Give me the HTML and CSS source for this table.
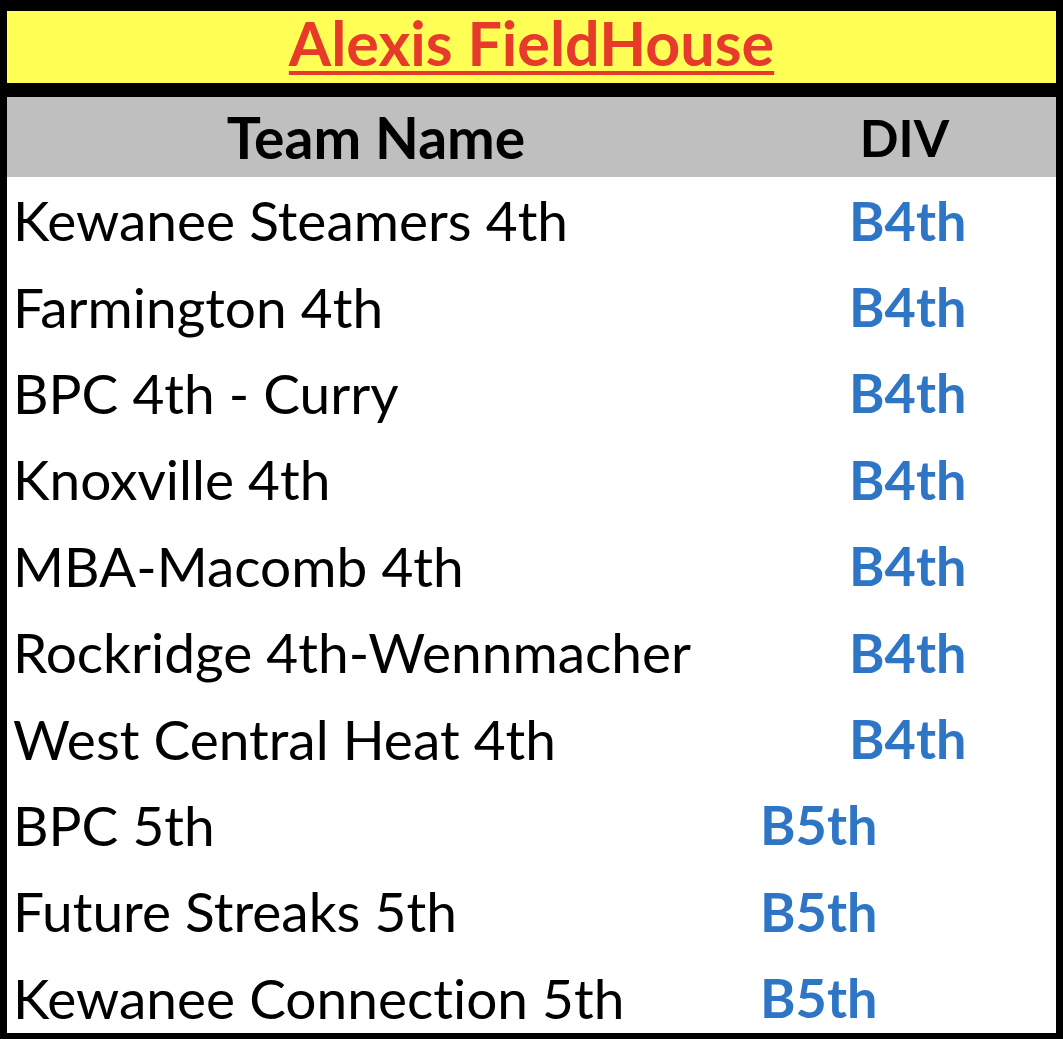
FILE: index.html
```html
<!DOCTYPE html>
<html>
<head>
<meta charset="utf-8">
<link rel="stylesheet" href="styles.css">
</head>
<body>
<div class="sheet">
  <div class="title"><span class="title-text">Alexis FieldHouse</span></div>
  <div class="head">
    <div class="col-name">Team Name</div>
    <div class="col-div">DIV</div>
  </div>
  <div class="rows">
    <div class="row"><div class="name">Kewanee Steamers 4th</div><div class="div b4">B4th</div></div>
    <div class="row"><div class="name">Farmington 4th</div><div class="div b4">B4th</div></div>
    <div class="row"><div class="name">BPC 4th - Curry</div><div class="div b4">B4th</div></div>
    <div class="row"><div class="name">Knoxville 4th</div><div class="div b4">B4th</div></div>
    <div class="row"><div class="name">MBA-Macomb 4th</div><div class="div b4">B4th</div></div>
    <div class="row"><div class="name">Rockridge 4th-Wennmacher</div><div class="div b4">B4th</div></div>
    <div class="row"><div class="name">West Central Heat 4th</div><div class="div b4">B4th</div></div>
    <div class="row"><div class="name">BPC 5th</div><div class="div b5">B5th</div></div>
    <div class="row"><div class="name">Future Streaks 5th</div><div class="div b5">B5th</div></div>
    <div class="row"><div class="name">Kewanee Connection 5th</div><div class="div b5">B5th</div></div>
  </div>
</div>
</body>
</html>
```
FILE: styles.css
```css
html, body {
  margin: 0;
  padding: 0;
  background: #000;
}
.sheet {
  width: 1049px;
  height: 1022px;
  padding: 11px 7px 6px 7px;
  display: flex;
  flex-direction: column;
  font-family: Lato, "Open Sans", sans-serif;
  font-variant-ligatures: none;
}
.title {
  height: 72px;
  flex-shrink: 0;
  background: #ffff55;
  display: flex;
  justify-content: center;
  align-items: flex-start;
}
.title-text {
  color: #e63b2a;
  font-weight: 700;
  font-size: 61px;
  line-height: 64px;
  text-decoration: underline;
  text-decoration-thickness: 4px;
  text-underline-offset: 5px;
}
.head {
  margin-top: 14px;
  height: 80px;
  flex-shrink: 0;
  background: #bfbfbf;
  display: flex;
  align-items: center;
  font-weight: 700;
  color: #000;
}
.col-name {
  width: 738px;
  text-align: center;
  font-size: 57px;
}
.col-div {
  flex: 1;
  text-align: center;
  font-size: 51px;
  padding-left: 8px;
}
.rows {
  flex: 1;
  min-height: 0;
  overflow: hidden;
  background: #fff;
  display: flex;
  flex-direction: column;
}
.row {
  height: 86.4px;
  flex-shrink: 0;
  display: flex;
  align-items: center;
  font-size: 55px;
}
.name {
  width: 738px;
  padding-left: 6px;
  color: #000;
}
.div {
  color: #2e75c6;
  font-weight: 700;
  font-size: 54px;
}
.b4 { padding-left: 98px; }
.b5 { padding-left: 9px; }
```
